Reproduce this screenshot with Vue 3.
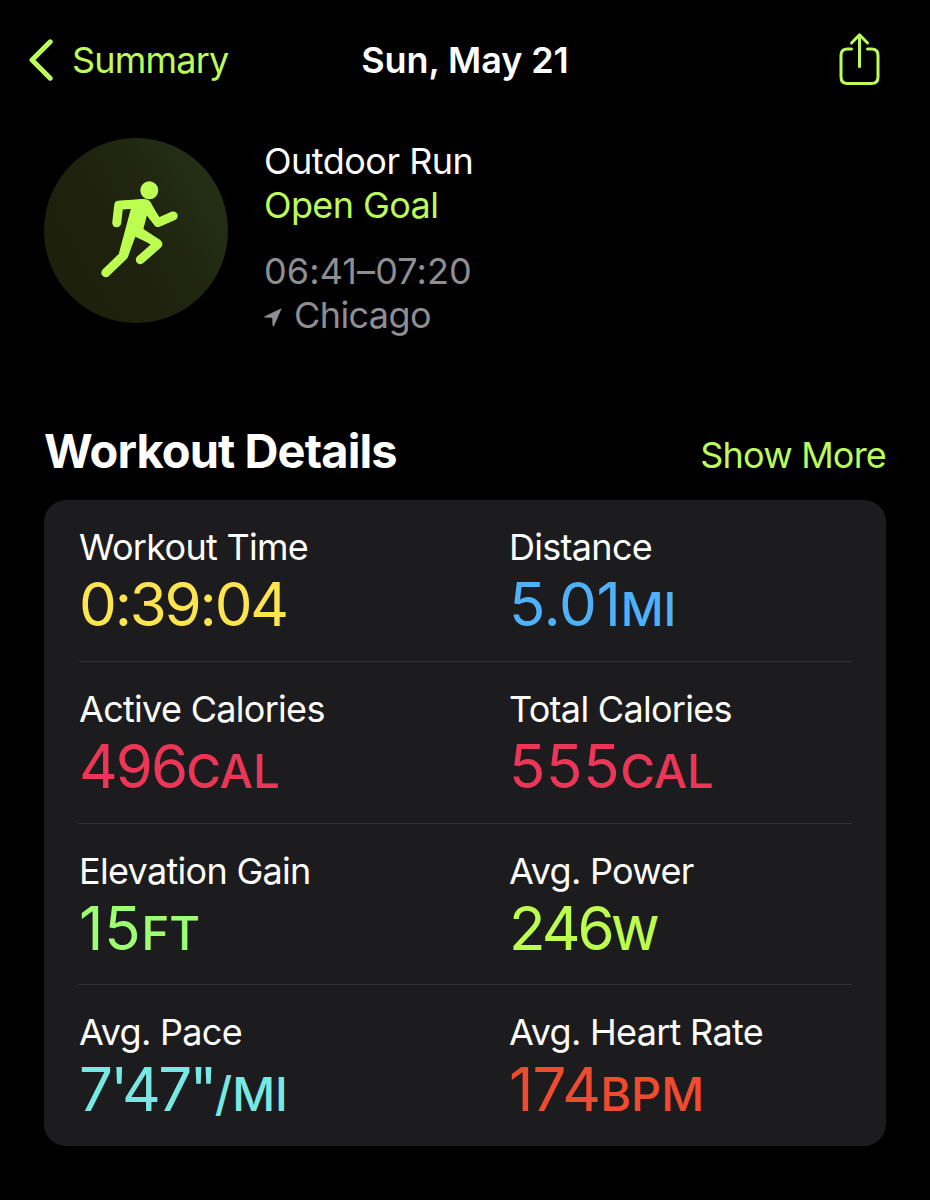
<script setup>
import { ref } from 'vue';

const workout = ref({
  date: 'Sun, May 21',
  type: 'Outdoor Run',
  goal: 'Open Goal',
  time: '06:41–07:20',
  place: 'Chicago',
})

// tracking is the letter spacing of the value, in px
const rows = ref([
  [
    { label: 'Workout Time', value: '0:39:04', unit: '', color: 'yellow', tracking: -2.2 },
    { label: 'Distance', value: '5.01', unit: 'MI', color: 'blue', tracking: -0.3 },
  ],
  [
    { label: 'Active Calories', value: '496', unit: 'CAL', color: 'red', tracking: -2 },
    { label: 'Total Calories', value: '555', unit: 'CAL', color: 'red', tracking: 0.6 },
  ],
  [
    { label: 'Elevation Gain', value: '15', unit: 'FT', color: 'green', tracking: 0.8 },
    { label: 'Avg. Power', value: '246', unit: 'W', color: 'lime', tracking: -3 },
  ],
  [
    { label: 'Avg. Pace', value: `7'47"`, unit: '/MI', color: 'cyan', tracking: -2.6 },
    { label: 'Avg. Heart Rate', value: '174', unit: 'BPM', color: 'orange', tracking: -0.8 },
  ],
])
</script>

<template>
  <main class="app">
    <header class="navbar">
      <a class="back">
        <svg class="chevron" viewBox="0 0 24 42">
          <path d="M21.2 2.8 L3 21 L21.2 39.2" />
        </svg>
        <span>Summary</span>
      </a>
      <h1>{{ workout.date }}</h1>
      <a class="share">
        <svg viewBox="0 0 42 54">
          <path d="M12.5 17 H8.5 Q2 17 2 23.5 V45 Q2 51.5 8.5 51.5 H32.5 Q39 51.5 39 45 V23.5 Q39 17 32.5 17 H28.5" />
          <path d="M20.5 34.5 V3 M12.5 11 L20.5 2.8 L28.5 11" />
        </svg>
      </a>
    </header>

    <section class="overview">
      <div class="badge">
        <svg viewBox="41 24 554 554">
          <circle cx="358" cy="180" r="27" />
          <path class="body" d="M264 212 L345 207 Q356 207 362 216 L388 262 L380 290 L351 254 L340 297 L392 330 L384 352 L316 320 L293 382 L271 385 L267 368 L303 234 L264 237 Z" />
          <path class="limb" d="M260 278 L266 225 L340 220 L384 277 L430 257" />
          <path class="limb" d="M328 305 L384 342 L331 389" />
          <path class="limb" d="M227 428 L280 377 L318 250" />
        </svg>
      </div>
      <div class="info">
        <p class="type">{{ workout.type }}</p>
        <p class="goal">{{ workout.goal }}</p>
        <p class="time">{{ workout.time }}</p>
        <p class="place">
          <svg viewBox="0 0 18 19">
            <path d="M17.6 0.6 Q17.8 0.2 17 0.4 L0.8 8.2 Q-0.2 9.2 1 9.6 L8.2 9.8 L8.5 17.6 Q9 19 10 18 Z" />
          </svg>
          <span>{{ workout.place }}</span>
        </p>
      </div>
    </section>

    <section class="details">
      <div class="heading">
        <h2>Workout Details</h2>
        <a class="more">Show More</a>
      </div>
      <div class="card">
        <div class="row" v-for="(row, index) in rows" :key="index">
          <div class="metric" v-for="item in row" :key="item.label">
            <div class="label">{{ item.label }}</div>
            <div :class="`value ${item.color}`" :style="{ letterSpacing: item.tracking + 'px' }">{{ item.value }}<span class="unit" v-if="item.unit">{{ item.unit }}</span></div>
          </div>
        </div>
      </div>
    </section>
  </main>
</template>

<style>
body {
  margin: 0;
  background-color: #000;
}
</style>

<style scoped>
* {
  margin: 0;
  padding: 0;
  box-sizing: border-box;
}
.app {
  min-height: 1200px;
  background-color: #000;
  color: #fff;
  font-family: Inter, 'Liberation Sans', sans-serif;
  font-size: 36px;
  line-height: 44px;
  overflow: hidden;
}
svg {
  display: block;
}
.navbar {
  display: grid;
  grid-template-columns: 1fr auto 1fr;
  align-items: center;
  height: 120px;
  padding: 0 29px;
}
.back {
  display: flex;
  align-items: center;
  gap: 19px;
  color: #bdfb57;
  letter-spacing: -0.8px;
}
.chevron {
  width: 24px;
  height: 42px;
  fill: none;
  stroke: #bdfb57;
  stroke-width: 5;
  stroke-linecap: round;
  stroke-linejoin: round;
}
h1 {
  font-size: 36px;
  font-weight: 600;
  letter-spacing: -0.1px;
}
.share {
  justify-self: end;
  margin: 0 20px 3px 0;
}
.share svg {
  width: 42px;
  height: 54px;
  fill: none;
  stroke: #bdfb57;
  stroke-width: 3;
  stroke-linecap: round;
  stroke-linejoin: round;
}
.overview {
  display: flex;
  gap: 36px;
  height: 221px;
  padding: 18px 44px 0;
}
.badge {
  width: 184px;
  height: 185px;
  border-radius: 50%;
  background: linear-gradient(60deg, #1c1f08, #1f230f 50%, #263317);
}
.badge svg {
  width: 184px;
  height: 185px;
  fill: #bdff50;
}
.badge .limb {
  fill: none;
  stroke: #bdff50;
  stroke-width: 27;
  stroke-linecap: round;
  stroke-linejoin: round;
}
.info {
  padding-top: 1px;
  letter-spacing: -0.6px;
}
.type {
  letter-spacing: -0.5px;
}
.goal {
  color: #bdfb57;
}
.time {
  margin-top: 22px;
  color: #8e8e93;
  letter-spacing: 0.1px;
}
.place {
  display: flex;
  align-items: center;
  gap: 12px;
  color: #8e8e93;
}
.place svg {
  width: 18px;
  height: 19px;
  margin-top: 4px;
  fill: #8e8e93;
}
.details {
  padding: 0 44px;
}
.heading {
  display: flex;
  justify-content: space-between;
  align-items: baseline;
  margin-top: 82px;
}
h2 {
  font-size: 47px;
  line-height: 56px;
  font-weight: 700;
  letter-spacing: -0.9px;
}
.more {
  color: #bdfb57;
  letter-spacing: -0.8px;
}
.card {
  display: flex;
  flex-direction: column;
  height: 646px;
  margin-top: 21px;
  padding: 0 34px;
  border-radius: 22px;
  background-color: #1c1c1e;
}
.row {
  display: grid;
  grid-template-columns: 430px 1fr;
  flex: 1;
  padding: 25px 0 0 1px;
}
.row + .row {
  border-top: 1px solid #323234;
}
.label {
  letter-spacing: -0.7px;
}
.value {
  margin-top: 3px;
  font-size: 60px;
  line-height: 64px;
}
.unit {
  font-size: 47px;
  font-weight: 500;
  letter-spacing: 0;
}
.yellow { color: #fee54f; }
.blue { color: #4fb1fa; }
.red { color: #ec3658; }
.green { color: #9dff73; }
.lime { color: #bdff4c; }
.cyan { color: #78e8e3; }
.orange { color: #ee4b2f; }
</style>
